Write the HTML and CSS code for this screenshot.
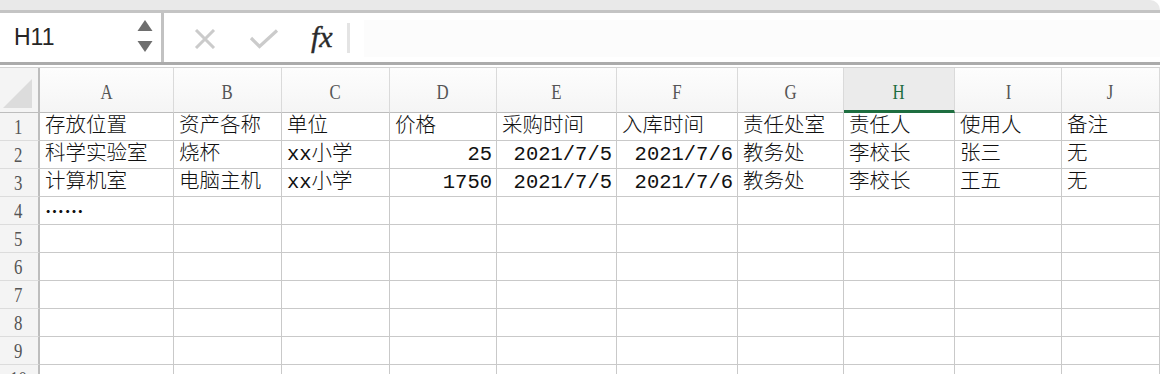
FILE: index.html
```html
<!DOCTYPE html>
<html lang="zh-CN">
<head>
  <meta charset="UTF-8">
  <title>资产登记表</title>
  <link rel="stylesheet" href="styles.css">
</head>
<body>

<div class="titlebar"></div>

<div class="formula-bar">
  <div class="name-box">
    <span class="cell-ref">H11</span>
    <svg class="spinner" width="16" height="34" viewBox="0 0 16 34">
      <path d="M8 0 L15.5 11 L0.5 11 Z" fill="#6e6e6e"/>
      <path d="M0.5 21 L15.5 21 L8 32 Z" fill="#6e6e6e"/>
    </svg>
  </div>
  <div class="actions">
    <svg class="icon-cancel" width="22" height="20" viewBox="0 0 22 20">
      <path d="M2 1 L20 19 M20 1 L2 19" stroke="#cbcbcb" stroke-width="3" fill="none"/>
    </svg>
    <svg class="icon-enter" width="30" height="20" viewBox="0 0 30 20">
      <path d="M2 9 L10.5 17.5 L28 1.5" stroke="#cbcbcb" stroke-width="3.2" fill="none"/>
    </svg>
    <span class="fx">fx</span>
    <span class="bar-sep"></span>
  </div>
  <div class="formula-input"></div>
</div>
<div class="bar-rule"></div>

<div class="sheet" id="sheet"></div>

<script>
  // Sheet data
  const columns = ["A", "B", "C", "D", "E", "F", "G", "H", "I", "J"];
  const activeCol = "H";
  const rows = [
    ["存放位置", "资产各称", "单位", "价格", "采购时间", "入库时间", "责任处室", "责任人", "使用人", "备注"],
    ["科学实验室", "烧杯", "xx小学", 25, "2021/7/5", "2021/7/6", "教务处", "李校长", "张三", "无"],
    ["计算机室", "电脑主机", "xx小学", 1750, "2021/7/5", "2021/7/6", "教务处", "李校长", "王五", "无"],
    ["……"]
  ];
  const totalRows = 10;
  const rightAligned = [3, 4, 5];

  const sheet = document.getElementById("sheet");

  function addCell(cls, text) {
    const div = document.createElement("div");
    div.className = cls;
    if (text !== undefined) div.textContent = text;
    sheet.appendChild(div);
    return div;
  }

  // Column headers
  const corner = addCell("corner");
  corner.innerHTML = '<svg width="30" height="30" viewBox="0 0 30 30"><path d="M29 1 L29 30 L0 30 Z" fill="#dcdcdc"/></svg>';
  columns.forEach(col => {
    const head = addCell(col === activeCol ? "col-head active" : "col-head");
    const label = document.createElement("span");
    label.textContent = col;
    head.appendChild(label);
  });

  // Rows
  for (let r = 0; r < totalRows; r++) {
    const head = addCell("row-head");
    const label = document.createElement("span");
    label.textContent = r + 1;
    head.appendChild(label);
    const data = rows[r] || [];
    columns.forEach((col, c) => {
      const value = data[c];
      let cls = "cell";
      if (rightAligned.includes(c) && r > 0) cls += " num";
      if (value === "……") cls += " dots";
      addCell(cls, value === undefined ? "" : value);
    });
  }
</script>

</body>
</html>
```

FILE: styles.css
```css
/* General */
body {
  margin: 0;
  background: #fff;
  overflow: hidden;
  font-family: "Liberation Sans", Arial, sans-serif;
}

/* Window strip */
.titlebar {
  height: 10px;
  background: #e9e9e9;
  border-bottom: 3px solid #c4c4c4;
  border-top-right-radius: 10px;
}

/* Formula bar */
.formula-bar {
  display: flex;
  height: 49px;
  background: #fff;
}
.name-box {
  width: 164px;
  display: flex;
  align-items: center;
  justify-content: space-between;
  border-right: 3px solid #c2c2c2;
  box-sizing: border-box;
  padding: 0 8px 2px 14px;
}
.cell-ref {
  font-size: 23px;
  color: #262626;
  margin-top: 2px;
}
.spinner {
  margin-top: 1px;
}
.actions {
  display: flex;
  align-items: center;
  padding-left: 30px;
}
.icon-cancel {
  margin-top: 3px;
}
.icon-enter {
  margin-left: 33px;
  margin-top: 3px;
}
.fx {
  margin-left: 32px;
  font-family: "Liberation Serif", serif;
  font-style: italic;
  font-size: 30px;
  color: #2a2a2a;
  margin-top: -2px;
  -webkit-text-stroke: 0.4px #2a2a2a;
}
.bar-sep {
  width: 3px;
  height: 30px;
  background: #e4e4e4;
  margin-left: 14px;
}
.formula-input {
  flex: 1;
  margin: 7px 0 5px 14px;
  background: #fcfcfc;
}
.bar-rule {
  height: 2px;
  border-top: 3px solid #ababab;
  border-bottom: 1px solid #d2d2d2;
}

/* Grid */
.sheet {
  display: grid;
  grid-template-columns: 40px 134px 108px 108px 107px 120px 121px 106px 111px 107px 1fr;
  grid-auto-rows: 28px;
  grid-template-rows: 45px;
  font-family: "Liberation Mono", "Noto Sans CJK SC", monospace;
  font-size: 20.5px;
  color: #111;
}
.sheet > div {
  box-sizing: border-box;
  border-right: 1px solid #c9c9c9;
  border-bottom: 1px solid #c9c9c9;
  overflow: hidden;
  white-space: nowrap;
}
.corner {
  background: #f4f4f4;
  display: flex;
  align-items: flex-end;
  padding: 0 5px 4px 3px;
  border-right: 2px solid #bdbdbd !important;
  border-bottom: 1px solid #bdbdbd !important;
}
.col-head {
  background: linear-gradient(#fdfdfd, #f5f5f5);
  border-right-color: #dadada !important;
  border-bottom: 1px solid #bdbdbd !important;
  display: flex;
  align-items: center;
  justify-content: center;
  padding-top: 4px;
}
.col-head span,
.row-head span {
  display: inline-block;
  font-family: "Liberation Serif", serif;
  font-size: 21px;
  color: #555;
  transform: scaleX(0.8);
}
.col-head.active {
  background: #ebebeb;
  border-bottom: 3px solid #1e6e40 !important;
  padding-top: 6px;
}
.col-head.active span {
  color: #1e6e40;
}
.row-head {
  background: #f4f4f4;
  border-right: 2px solid #bdbdbd !important;
  border-bottom-color: #dcdcdc !important;
  text-align: center;
  line-height: 28px;
  padding-right: 2px;
}
.cell {
  line-height: 27px;
  padding: 0 4px 0 5px;
  font-weight: 300;
}
.cell.num {
  text-align: right;
}
.sheet > .cell.dots {
  font-family: "Noto Sans CJK SC", sans-serif;
  font-size: 19px;
  font-weight: 700;
  letter-spacing: 0.5px;
  overflow: visible;
}
```
